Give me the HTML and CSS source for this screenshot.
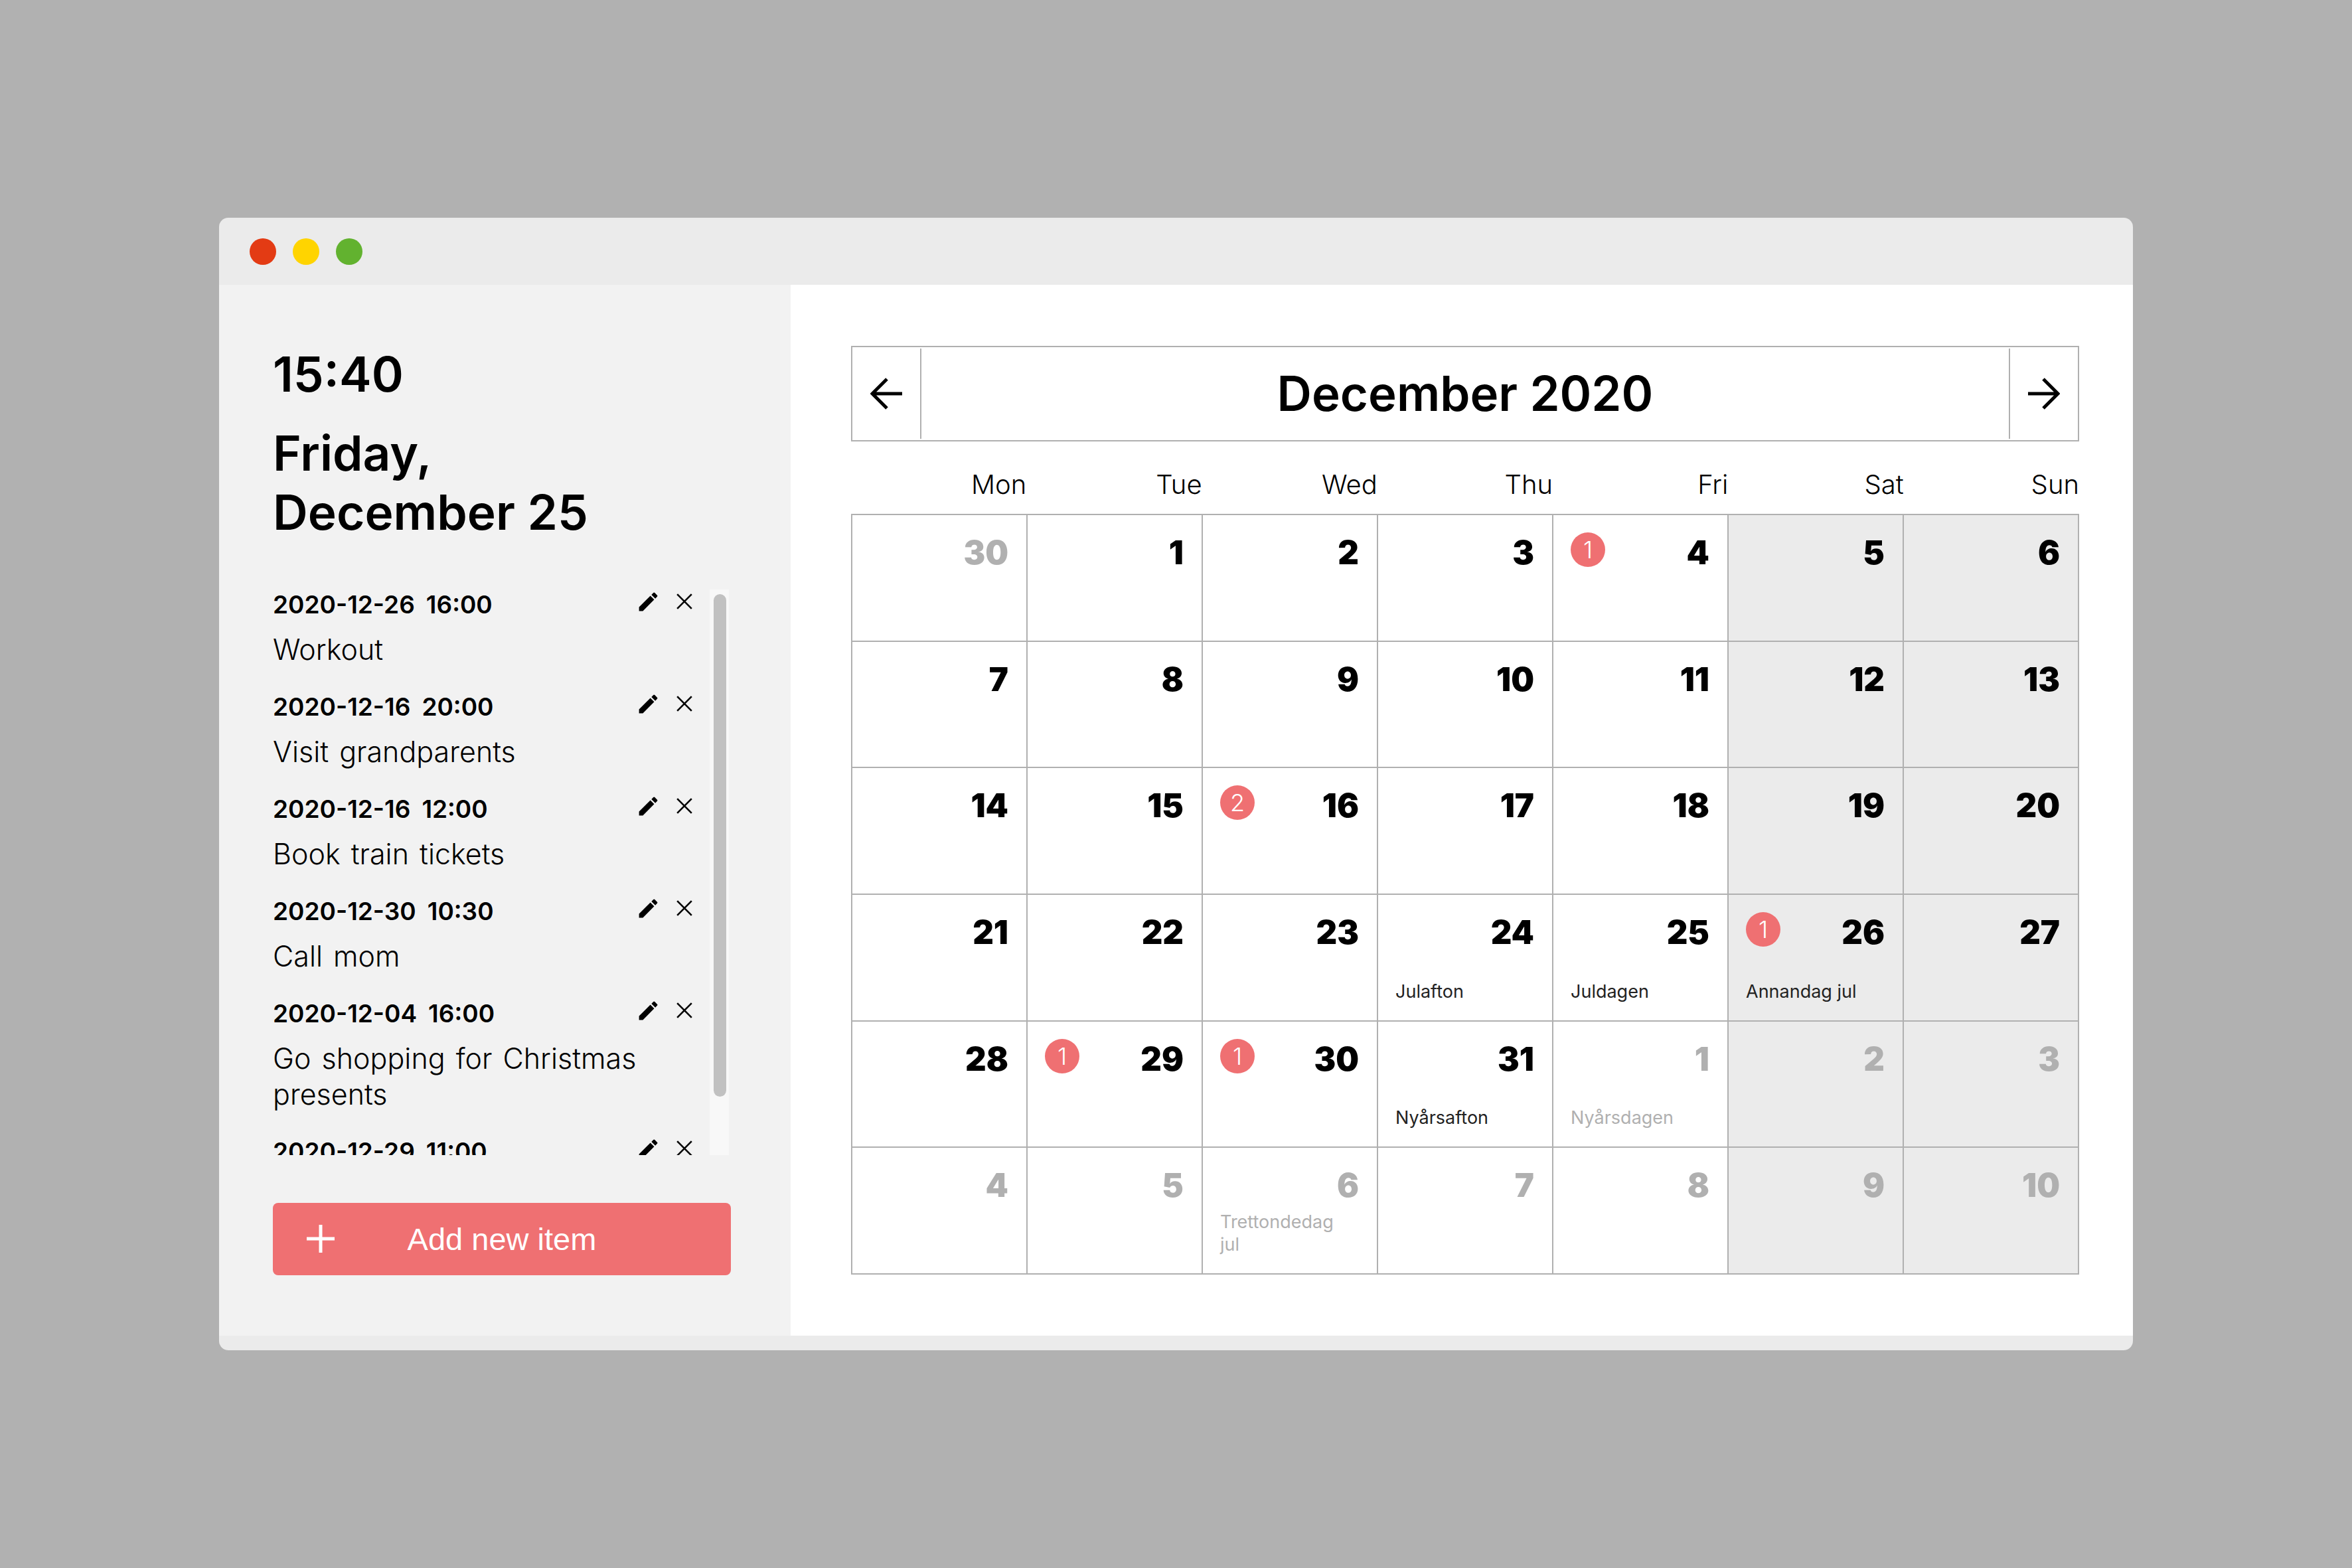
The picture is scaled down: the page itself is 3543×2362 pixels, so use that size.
FILE: index.html
```html
<!DOCTYPE html>
<html lang="en">
<head>
  <meta charset="UTF-8">
  <title>Calendar</title>
  <link rel="stylesheet" href="styles.css">
</head>
<body>
  <div class="window">
    <div class="titlebar">
      <span class="dot red"></span>
      <span class="dot yellow"></span>
      <span class="dot green"></span>
    </div>

    <div class="main">
      <aside class="sidebar">
        <div class="time">15:40</div>
        <h1 class="today">Friday,<br>December 25</h1>

        <div class="todo-box">
          <ul class="todo-list">
            <li class="todo">
              <div class="todo-head">
                <span class="todo-date">2020-12-26</span><span class="todo-date">16:00</span>
                <svg class="icon-edit" viewBox="0 0 24 24"><use href="#pencil"/></svg>
                <svg class="icon-close" viewBox="0 0 24 24"><use href="#cross"/></svg>
              </div>
              <div class="todo-title">Workout</div>
            </li>
            <li class="todo">
              <div class="todo-head">
                <span class="todo-date">2020-12-16</span><span class="todo-date">20:00</span>
                <svg class="icon-edit" viewBox="0 0 24 24"><use href="#pencil"/></svg>
                <svg class="icon-close" viewBox="0 0 24 24"><use href="#cross"/></svg>
              </div>
              <div class="todo-title">Visit grandparents</div>
            </li>
            <li class="todo">
              <div class="todo-head">
                <span class="todo-date">2020-12-16</span><span class="todo-date">12:00</span>
                <svg class="icon-edit" viewBox="0 0 24 24"><use href="#pencil"/></svg>
                <svg class="icon-close" viewBox="0 0 24 24"><use href="#cross"/></svg>
              </div>
              <div class="todo-title">Book train tickets</div>
            </li>
            <li class="todo">
              <div class="todo-head">
                <span class="todo-date">2020-12-30</span><span class="todo-date">10:30</span>
                <svg class="icon-edit" viewBox="0 0 24 24"><use href="#pencil"/></svg>
                <svg class="icon-close" viewBox="0 0 24 24"><use href="#cross"/></svg>
              </div>
              <div class="todo-title">Call mom</div>
            </li>
            <li class="todo">
              <div class="todo-head">
                <span class="todo-date">2020-12-04</span><span class="todo-date">16:00</span>
                <svg class="icon-edit" viewBox="0 0 24 24"><use href="#pencil"/></svg>
                <svg class="icon-close" viewBox="0 0 24 24"><use href="#cross"/></svg>
              </div>
              <div class="todo-title">Go shopping for Christmas presents</div>
            </li>
            <li class="todo">
              <div class="todo-head">
                <span class="todo-date">2020-12-29</span><span class="todo-date">11:00</span>
                <svg class="icon-edit" viewBox="0 0 24 24"><use href="#pencil"/></svg>
                <svg class="icon-close" viewBox="0 0 24 24"><use href="#cross"/></svg>
              </div>
            </li>
          </ul>
          <div class="scrollbar"><div class="scrollbar-thumb"></div></div>
        </div>

        <button class="add-btn">
          <svg class="add-icon" viewBox="0 0 44 44"><path d="M22 1v42M1 22h42"/></svg>
          Add new item
        </button>
      </aside>

      <section class="calendar">
        <div class="cal-head">
          <button class="cal-nav prev">
            <svg viewBox="0 0 48 48"><path d="M48 24H3M25 2L3 24l22 22"/></svg>
          </button>
          <h2 class="cal-title">December 2020</h2>
          <button class="cal-nav next">
            <svg viewBox="0 0 48 48"><path d="M0 24h45M23 2l22 22-22 22"/></svg>
          </button>
        </div>

        <div class="weekdays">
          <span>Mon</span><span>Tue</span><span>Wed</span><span>Thu</span><span>Fri</span><span>Sat</span><span>Sun</span>
        </div>

        <div class="grid">
          <div class="cell other"><div class="cell-top"><span class="num">30</span></div></div>
          <div class="cell"><div class="cell-top"><span class="num">1</span></div></div>
          <div class="cell"><div class="cell-top"><span class="num">2</span></div></div>
          <div class="cell"><div class="cell-top"><span class="num">3</span></div></div>
          <div class="cell"><div class="cell-top"><span class="badge">1</span><span class="num">4</span></div></div>
          <div class="cell weekend"><div class="cell-top"><span class="num">5</span></div></div>
          <div class="cell weekend"><div class="cell-top"><span class="num">6</span></div></div>

          <div class="cell"><div class="cell-top"><span class="num">7</span></div></div>
          <div class="cell"><div class="cell-top"><span class="num">8</span></div></div>
          <div class="cell"><div class="cell-top"><span class="num">9</span></div></div>
          <div class="cell"><div class="cell-top"><span class="num">10</span></div></div>
          <div class="cell"><div class="cell-top"><span class="num">11</span></div></div>
          <div class="cell weekend"><div class="cell-top"><span class="num">12</span></div></div>
          <div class="cell weekend"><div class="cell-top"><span class="num">13</span></div></div>

          <div class="cell"><div class="cell-top"><span class="num">14</span></div></div>
          <div class="cell"><div class="cell-top"><span class="num">15</span></div></div>
          <div class="cell"><div class="cell-top"><span class="badge">2</span><span class="num">16</span></div></div>
          <div class="cell"><div class="cell-top"><span class="num">17</span></div></div>
          <div class="cell"><div class="cell-top"><span class="num">18</span></div></div>
          <div class="cell weekend"><div class="cell-top"><span class="num">19</span></div></div>
          <div class="cell weekend"><div class="cell-top"><span class="num">20</span></div></div>

          <div class="cell"><div class="cell-top"><span class="num">21</span></div></div>
          <div class="cell"><div class="cell-top"><span class="num">22</span></div></div>
          <div class="cell"><div class="cell-top"><span class="num">23</span></div></div>
          <div class="cell"><div class="cell-top"><span class="num">24</span></div><div class="holiday">Julafton</div></div>
          <div class="cell"><div class="cell-top"><span class="num">25</span></div><div class="holiday">Juldagen</div></div>
          <div class="cell weekend"><div class="cell-top"><span class="badge">1</span><span class="num">26</span></div><div class="holiday">Annandag jul</div></div>
          <div class="cell weekend"><div class="cell-top"><span class="num">27</span></div></div>

          <div class="cell"><div class="cell-top"><span class="num">28</span></div></div>
          <div class="cell"><div class="cell-top"><span class="badge">1</span><span class="num">29</span></div></div>
          <div class="cell"><div class="cell-top"><span class="badge">1</span><span class="num">30</span></div></div>
          <div class="cell"><div class="cell-top"><span class="num">31</span></div><div class="holiday">Nyårsafton</div></div>
          <div class="cell other"><div class="cell-top"><span class="num">1</span></div><div class="holiday">Nyårsdagen</div></div>
          <div class="cell weekend other"><div class="cell-top"><span class="num">2</span></div></div>
          <div class="cell weekend other"><div class="cell-top"><span class="num">3</span></div></div>

          <div class="cell other"><div class="cell-top"><span class="num">4</span></div></div>
          <div class="cell other"><div class="cell-top"><span class="num">5</span></div></div>
          <div class="cell other"><div class="cell-top"><span class="num">6</span></div><div class="holiday">Trettondedag jul</div></div>
          <div class="cell other"><div class="cell-top"><span class="num">7</span></div></div>
          <div class="cell other"><div class="cell-top"><span class="num">8</span></div></div>
          <div class="cell weekend other"><div class="cell-top"><span class="num">9</span></div></div>
          <div class="cell weekend other"><div class="cell-top"><span class="num">10</span></div></div>
        </div>
      </section>
    </div>

    <div class="statusbar"></div>
  </div>

  <svg class="defs" width="0" height="0">
    <symbol id="pencil" viewBox="0 0 24 24">
      <path d="M3 17.25V21h3.75L17.81 9.94l-3.75-3.75L3 17.25zM20.71 7.04a1 1 0 0 0 0-1.41l-2.34-2.34a1 1 0 0 0-1.41 0l-1.83 1.83 3.75 3.75 1.83-1.83z"/>
    </symbol>
    <symbol id="cross" viewBox="0 0 24 24">
      <path d="M2 2l20 20M22 2L2 22" fill="none" stroke="#000" stroke-width="2.4"/>
    </symbol>
  </svg>
</body>
</html>
```

FILE: styles.css
```css
* {
  box-sizing: border-box;
}

body {
  margin: 0;
  width: 3543px;
  height: 2362px;
  background: #b1b1b1;
  font-family: Inter, "Liberation Sans", sans-serif;
  color: #000;
  display: flex;
  align-items: center;
  justify-content: center;
  overflow: hidden;
}

.defs {
  position: absolute;
}

.window {
  width: 2883px;
  height: 1706px;
  border-radius: 14px;
  overflow: hidden;
  background: #ebebeb;
  display: flex;
  flex-direction: column;
}

.titlebar {
  height: 101px;
  display: flex;
  align-items: center;
  gap: 25px;
  padding-left: 46px;
}

.dot {
  width: 40px;
  height: 40px;
  border-radius: 50%;
}

.red { background: #e33b14; }
.yellow { background: #ffd400; }
.green { background: #62b22f; }

.main {
  flex: 1;
  display: flex;
  min-height: 0;
}

.statusbar {
  height: 22px;
}

/* sidebar */
.sidebar {
  width: 861px;
  background: #f2f2f2;
  padding: 93px 90px 0 81px;
  display: flex;
  flex-direction: column;
}

.time {
  font-size: 73px;
  line-height: 84px;
  font-weight: 600;
}

.today {
  margin: 32px 0 72px;
  font-size: 73px;
  line-height: 89px;
  font-weight: 600;
}

.todo-box {
  display: flex;
  height: 852px;
  margin-right: 3px;
}

.todo-list {
  flex: 1;
  list-style: none;
  margin: 0;
  padding: 0 25px 0 0;
  overflow: hidden;
}

.scrollbar {
  width: 29px;
  background: #f8f8f8;
  padding: 7px 4px 0 6px;
}

.scrollbar-thumb {
  height: 757px;
  background: #c1c1c1;
  border-radius: 10px;
}

.todo {
  padding-bottom: 37px;
}

.todo-head {
  display: flex;
  align-items: center;
  gap: 17px;
  height: 46px;
}

.todo-date {
  font-size: 37px;
  font-weight: 600;
  line-height: 46px;
}

.icon-edit {
  width: 37px;
  height: 37px;
  margin: 0 0 10px auto;
}

.icon-close {
  width: 26px;
  height: 26px;
  margin: 0 0 10px 6px;
}

.todo-title {
  margin-top: 17px;
  font-size: 43px;
  word-spacing: 4px;
  line-height: 54px;
  font-weight: 300;
}

.add-btn {
  position: relative;
  margin-top: 72px;
  height: 109px;
  border: none;
  border-radius: 8px;
  background: #ef7072;
  color: #fff;
  font-family: "Liberation Sans", Arial, sans-serif;
  font-size: 47px;
  text-align: center;
}

.add-icon {
  position: absolute;
  left: 50px;
  top: 32px;
  width: 44px;
  height: 44px;
  fill: none;
  stroke: #fff;
  stroke-width: 5;
}

/* calendar */
.calendar {
  flex: 1;
  background: #fff;
  padding: 92px 81px 0 91px;
}

.cal-head {
  display: flex;
  align-items: stretch;
  height: 144px;
  border: 2px solid #b0b0b0;
}

.cal-nav {
  width: 104px;
  margin: 2px 0;
  padding: 0;
  border: none;
  background: none;
  display: flex;
  align-items: center;
  justify-content: center;
}

.cal-nav svg {
  width: 48px;
  height: 48px;
  fill: none;
  stroke: #000;
  stroke-width: 5;
}

.prev {
  border-right: 2px solid #b0b0b0;
}

.next {
  border-left: 2px solid #b0b0b0;
}

.cal-title {
  flex: 1;
  margin: 0;
  font-size: 72.5px;
  font-weight: 600;
  line-height: 139px;
  text-align: center;
}

.weekdays {
  display: grid;
  grid-template-columns: repeat(7, 1fr);
  margin: 41px 0 20px;
  font-size: 40px;
  line-height: 48px;
  font-weight: 300;
  text-align: right;
}

.grid {
  display: grid;
  grid-template-columns: repeat(7, 1fr);
  grid-template-rows: repeat(6, 1fr);
  height: 1146px;
  border-top: 2px solid #b0b0b0;
  border-left: 2px solid #b0b0b0;
}

.cell {
  display: flex;
  flex-direction: column;
  padding: 26px 27px 26px 26px;
  border-right: 2px solid #b0b0b0;
  border-bottom: 2px solid #b0b0b0;
}

.weekend {
  background: #ebebeb;
}

.cell-top {
  display: flex;
  justify-content: space-between;
}

.num {
  margin: 6px 0 0 auto;
  font-size: 49px;
  line-height: 49px;
  font-weight: 900;
}

.other .num,
.other .holiday {
  color: #b0b0b0;
}

.badge {
  width: 52px;
  height: 52px;
  border-radius: 50%;
  background: #ef7072;
  color: #fff;
  font-size: 36px;
  font-weight: 300;
  line-height: 52px;
  text-align: center;
}

.holiday {
  margin-top: auto;
  padding-right: 14px;
  font-size: 27px;
  line-height: 34px;
  color: #222;
}
```
